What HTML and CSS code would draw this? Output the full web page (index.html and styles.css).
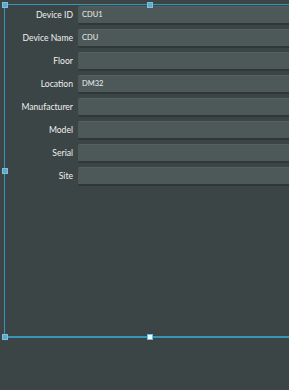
FILE: index.html
```html
<!DOCTYPE html>
<html lang="en">
<head>
    <meta charset="UTF-8">
    <meta name="viewport" content="width=device-width, initial-scale=1.0">
    <title>Device Properties</title>
    <link rel="stylesheet" href="styles.css">
</head>
<body>
    <div class="canvas">
        <div class="form">
            <div class="row"><label>Device ID</label><div class="field">CDU1</div></div>
            <div class="row"><label>Device Name</label><div class="field">CDU</div></div>
            <div class="row"><label>Floor</label><div class="field"></div></div>
            <div class="row"><label>Location</label><div class="field">DM32</div></div>
            <div class="row"><label>Manufacturer</label><div class="field"></div></div>
            <div class="row"><label>Model</label><div class="field"></div></div>
            <div class="row"><label>Serial</label><div class="field"></div></div>
            <div class="row"><label>Site</label><div class="field"></div></div>
        </div>

        <!-- selection box drawn over the form -->
        <div class="selection">
            <span class="handle tl"></span>
            <span class="handle tm"></span>
            <span class="handle ml"></span>
            <span class="handle bl"></span>
            <span class="handle bm"></span>
        </div>
    </div>
</body>
</html>
```

FILE: styles.css
```css
body {
    margin: 0;
    background-color: #3c4545;
    font-family: Lato, "Noto Sans", sans-serif;
}
.canvas {
    position: relative;
    height: 390px;
    overflow: hidden;
}
.form {
    display: flex;
    flex-direction: column;
    gap: 2px;
    padding-top: 5px;
}
.row {
    display: flex;
    align-items: center;
    height: 21px;
}
.row label {
    width: 78px;
    padding: 0 5px 2px 0;
    box-sizing: border-box;
    text-align: right;
    font-size: 8.6px;
    color: #eef0f0;
    white-space: nowrap;
}
.field {
    flex: 1;
    height: 19px;
    box-sizing: border-box;
    background-color: #4d5858;
    border-top: 1px solid #556060;
    border-bottom: 2px solid #2f3737;
    border-radius: 2px 0 0 2px;
    padding-left: 4px;
    font-size: 7.5px;
    line-height: 15px;
    color: #eef0f0;
}

/* selection overlay */
.selection {
    position: absolute;
    left: 4px;
    top: 4px;
    width: 300px;
    height: 331px;
    border-left: 1px solid #3a93b8;
    border-top: 1px solid #3a93b8;
    border-bottom: 2px solid #3a93b8;
}
.handle {
    position: absolute;
    width: 4px;
    height: 4px;
    background-color: #5fa9c9;
    border: 1px solid #7cc0dc;
}
.handle.tl { left: -3px; top: -3px; }
.handle.tm { left: 142px; top: -3px; }
.handle.ml { left: -3px; top: 163px; }
.handle.bl { left: -3px; bottom: -4px; }
.handle.bm { left: 142px; bottom: -4px; background-color: #ffffff; border-color: #5fc5ee; }
```
